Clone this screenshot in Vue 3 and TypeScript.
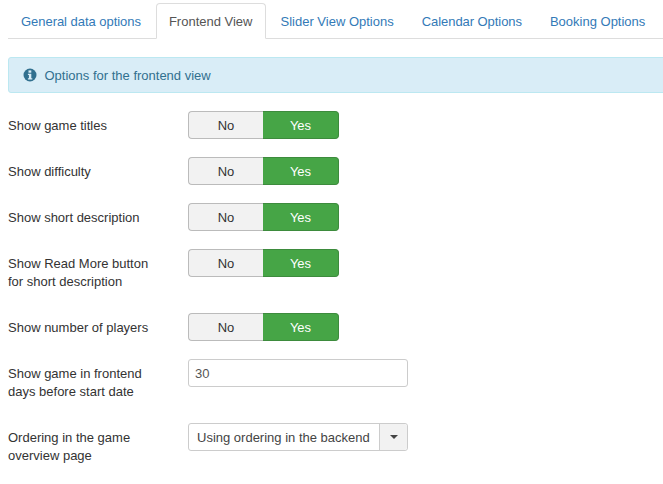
<template>
  <div class="page">
    <ul class="tabs">
      <li v-for="tab in tabs" :key="tab" class="tab" :class="{ active: tab === activeTab }">{{ tab }}</li>
    </ul>

    <div class="alert">
      <svg class="info-icon" viewBox="0 0 14 14" width="14" height="14">
        <circle cx="7" cy="7" r="6.5" fill="#31708f" />
        <rect x="5.5" y="2.4" width="2.8" height="2.3" fill="#d9edf7" />
        <path d="M4.9 5.7h3.4v4.5h1v1.4H4.9v-1.4h1V7.1h-1z" fill="#d9edf7" />
      </svg>
      <span>Options for the frontend view</span>
    </div>

    <form class="options">
      <div v-for="row in toggleRowsTop" :key="row" class="row">
        <label class="row-label" v-html="row"></label>
        <div class="toggle">
          <span class="toggle-no">No</span>
          <span class="toggle-yes">Yes</span>
        </div>
      </div>

      <div class="row">
        <label class="row-label">Show game in frontend<br />days before start date</label>
        <div class="text-input">30</div>
      </div>

      <div class="row">
        <label class="row-label">Ordering in the game<br />overview page</label>
        <div class="select">
          <span class="select-value">Using ordering in the backend</span>
          <span class="select-btn"><i class="caret"></i></span>
        </div>
      </div>
    </form>
  </div>
</template>

<script setup lang="ts">
const tabs: string[] = [
  'General data options',
  'Frontend View',
  'Slider View Options',
  'Calendar Options',
  'Booking Options',
];
const activeTab = 'Frontend View';

const toggleRowsTop: string[] = [
  'Show game titles',
  'Show difficulty',
  'Show short description',
  'Show Read More button<br>for short description',
  'Show number of players',
];
</script>

<style>
html,
body {
  margin: 0;
  overflow: hidden;
  background: #fff;
}
</style>

<style scoped>
.page {
  width: 663px;
  height: 484px;
  overflow: hidden;
  box-sizing: border-box;
  padding: 3px 0 0 8px;
  font-family: "Liberation Sans", Arial, sans-serif;
  font-size: 13px;
  line-height: 18px;
  color: #333;
}

.tabs {
  display: flex;
  list-style: none;
  margin: 0 0 18px;
  padding: 0;
  border-bottom: 1px solid #ddd;
  white-space: nowrap;
}

.tab {
  flex: none;
  margin: 0 2px -1px 0;
  padding: 9px 12px 7px;
  border: 1px solid transparent;
  border-radius: 4px 4px 0 0;
  color: #337ab7;
}

.tab:nth-child(1) {
  letter-spacing: -0.04px;
}

.tab:nth-child(4) {
  letter-spacing: -0.06px;
}

.tab.active {
  color: #555;
  background: #fff;
  border-color: #ddd #ddd #fff;
}

.alert {
  display: flex;
  align-items: center;
  gap: 7.5px;
  width: 700px;
  height: 36px;
  box-sizing: border-box;
  padding: 0 14px;
  margin-bottom: 18px;
  background: #d9edf7;
  border: 1px solid #bce8f1;
  border-radius: 3px;
  color: #31708f;
}

.alert span {
  padding-top: 2px;
}

.info-icon {
  flex: none;
}

.row {
  display: flex;
  align-items: flex-start;
  margin-bottom: 18px;
}

.row-label {
  flex: none;
  width: 180px;
  padding: 6px 0 4px;
}

.toggle {
  display: flex;
  width: 151px;
  height: 28px;
  box-sizing: border-box;
  border-radius: 4px;
  text-align: center;
  line-height: 28px;
}

.toggle-no {
  flex: none;
  width: 75px;
  box-sizing: border-box;
  background: #f2f2f2;
  border: 1px solid #bbb;
  border-right: 0;
  border-radius: 4px 0 0 4px;
  color: #333;
}

.toggle-yes {
  flex: 1;
  background: #46a546;
  border: 1px solid #3d8b3d;
  border-left: 0;
  border-radius: 0 4px 4px 0;
  color: #fff;
}

.text-input {
  width: 220px;
  height: 28px;
  box-sizing: border-box;
  padding: 1px 6px 0;
  line-height: 26px;
  color: #555;
  background: #fff;
  border: 1px solid #ccc;
  border-radius: 3px;
}

.select {
  display: flex;
  width: 220px;
  height: 28px;
  box-sizing: border-box;
  line-height: 26px;
  border: 1px solid #ccc;
  border-radius: 3px;
  color: #444;
  background: #fff;
}

.select-value {
  flex: 1;
  padding: 1px 0 0 8px;
  white-space: nowrap;
  overflow: hidden;
}

.select-btn {
  flex: none;
  display: flex;
  align-items: center;
  justify-content: center;
  box-sizing: border-box;
  width: 28px;
  background: #f2f2f2;
  border-left: 1px solid #ccc;
  border-radius: 0 3px 3px 0;
}

.caret {
  width: 0;
  height: 0;
  border-top: 4px solid #444;
  border-left: 4px solid transparent;
  border-right: 4px solid transparent;
}
</style>
